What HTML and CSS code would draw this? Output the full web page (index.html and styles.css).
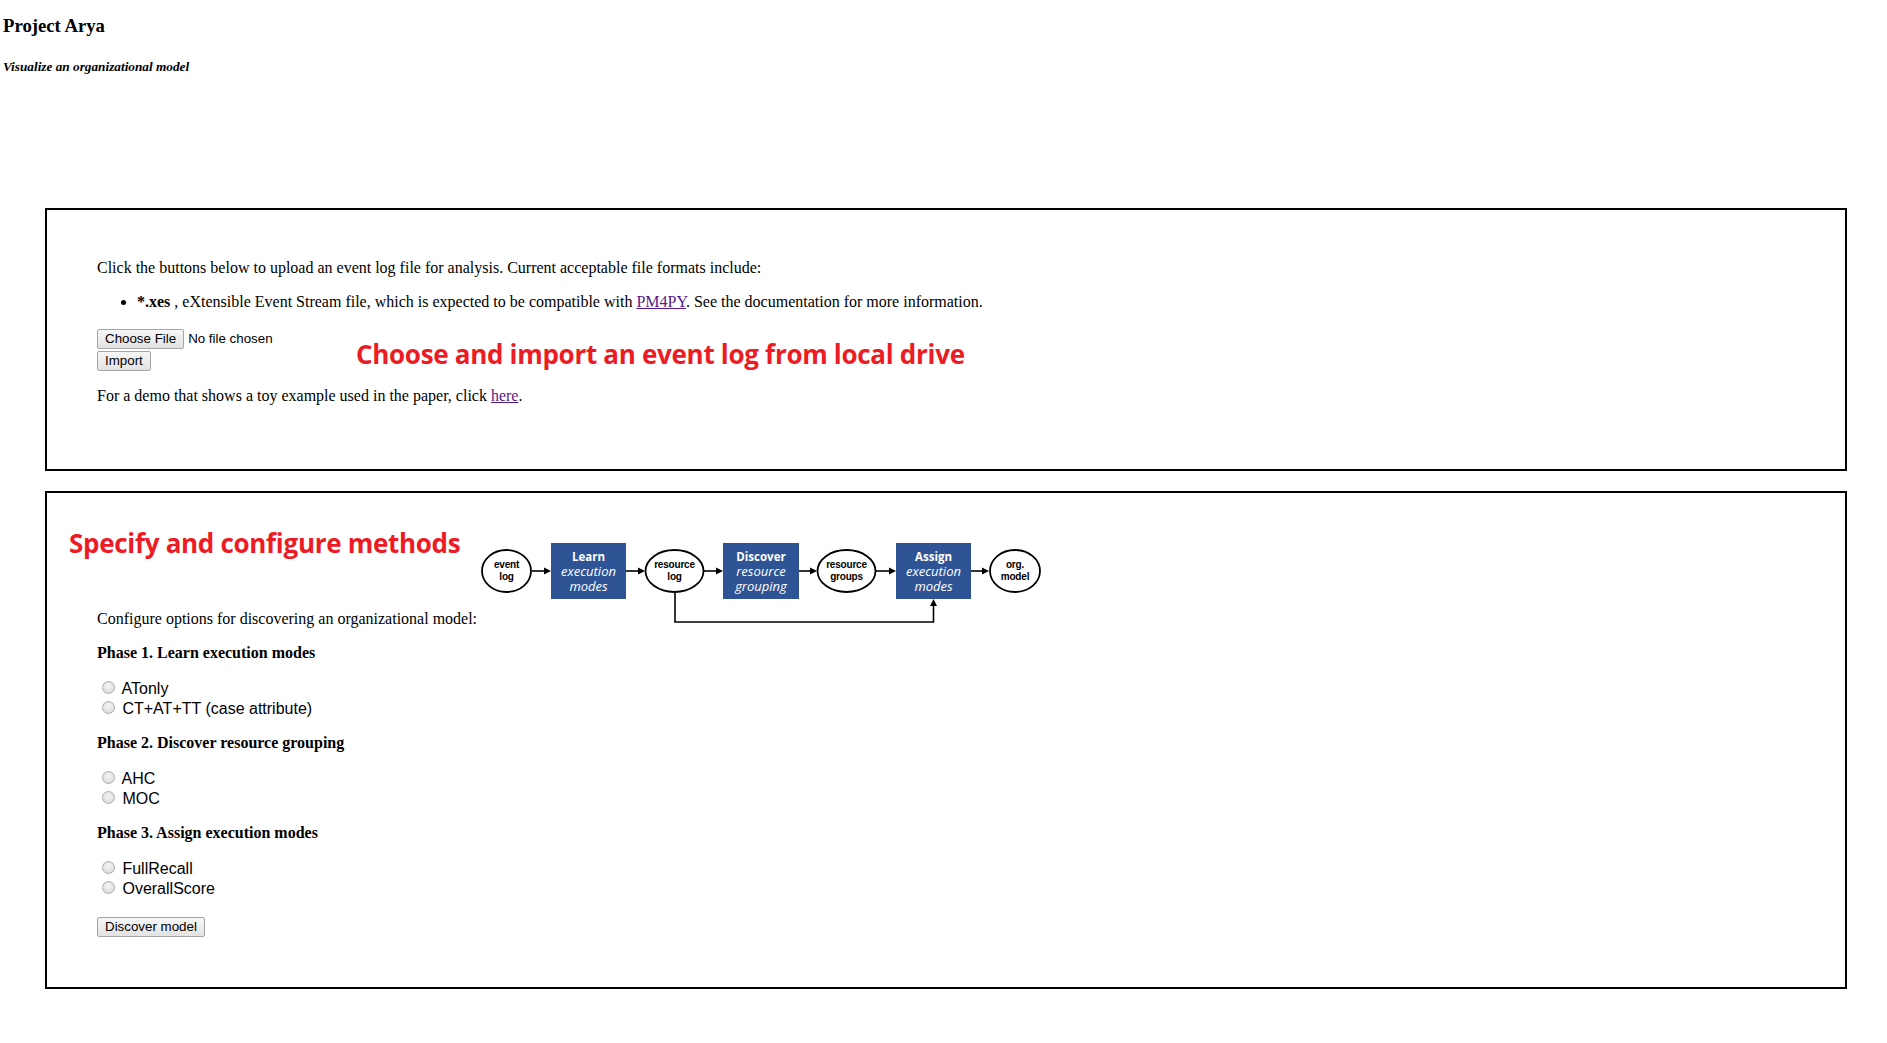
FILE: index.html
```html
<!DOCTYPE html>
<html lang="en">
<head>
<meta charset="utf-8">
<title>Project Arya</title>
<link rel="stylesheet" href="styles.css">
</head>
<body>
<header class="masthead">
  <h3 class="title">Project Arya</h3>
  <h5 class="subtitle">Visualize an organizational model</h5>
</header>

<section class="panel panel-import">
  <p>Click the buttons below to upload an event log file for analysis. Current acceptable file formats include:</p>
  <ul>
    <li><b>*.xes</b> , eXtensible Event Stream file, which is expected to be compatible with <a href="#">PM4PY</a>. See the documentation for more information.</li>
  </ul>
  <form class="upload">
    <input type="file" class="file"><br>
    <button type="button" class="btn">Import</button>
  </form>
  <p>For a demo that shows a toy example used in the paper, click <a href="#">here</a>.</p>
  <div class="callout callout-import">Choose and import an event log from local drive</div>
</section>

<section class="panel panel-config">
  <p>Configure options for discovering an organizational model:</p>

  <p class="phase">Phase 1. Learn execution modes</p>
  <p class="opts">
    <label><input type="radio" class="radio" name="p1"> ATonly</label><br>
    <label><input type="radio" class="radio" name="p1"> CT+AT+TT (case attribute)</label>
  </p>

  <p class="phase">Phase 2. Discover resource grouping</p>
  <p class="opts">
    <label><input type="radio" class="radio" name="p2"> AHC</label><br>
    <label><input type="radio" class="radio" name="p2"> MOC</label>
  </p>

  <p class="phase">Phase 3. Assign execution modes</p>
  <p class="opts">
    <label><input type="radio" class="radio" name="p3"> FullRecall</label><br>
    <label><input type="radio" class="radio" name="p3"> OverallScore</label>
  </p>

  <p class="submit"><button type="button" class="btn">Discover model</button></p>

  <div class="callout callout-config">Specify and configure methods</div>

  <svg class="flow" width="560" height="84" viewBox="0 0 560 84" aria-label="pipeline diagram">
    <g class="lines" stroke="#000" stroke-width="1.6" fill="none">
      <line x1="51" y1="28" x2="64" y2="28"/>
      <line x1="145" y1="28" x2="158" y2="28"/>
      <line x1="223" y1="28" x2="236" y2="28"/>
      <line x1="318" y1="28" x2="330" y2="28"/>
      <line x1="395" y1="28" x2="409" y2="28"/>
      <line x1="490" y1="28" x2="502" y2="28"/>
      <path d="M194,49 V79 H452.5 V63"/>
    </g>
    <g class="heads" fill="#000">
      <polygon points="63,24.5 70,28 63,31.5"/>
      <polygon points="157,24.5 164,28 157,31.5"/>
      <polygon points="235,24.5 242,28 235,31.5"/>
      <polygon points="329,24.5 336,28 329,31.5"/>
      <polygon points="408,24.5 415,28 408,31.5"/>
      <polygon points="501,24.5 508,28 501,31.5"/>
      <polygon points="449,63 452.5,56 456,63"/>
    </g>

    <g class="nodes" stroke="#000" stroke-width="1.8" fill="#fff">
      <ellipse cx="25.5" cy="28" rx="24.5" ry="21"/>
      <ellipse cx="193.5" cy="28" rx="29" ry="21"/>
      <ellipse cx="365.5" cy="28" rx="29" ry="21"/>
      <ellipse cx="534" cy="28" rx="25" ry="21"/>
    </g>
    <g class="steps" fill="#2f5496">
      <rect x="70" y="0" width="75" height="56"/>
      <rect x="242" y="0" width="76" height="56"/>
      <rect x="415" y="0" width="75" height="56"/>
    </g>

    <g class="node-text" text-anchor="middle">
      <text x="25.5" y="25">event</text><text x="25.5" y="36.5">log</text>
      <text x="193.5" y="25">resource</text><text x="193.5" y="36.5">log</text>
      <text x="365.5" y="25">resource</text><text x="365.5" y="36.5">groups</text>
      <text x="534" y="25">org.</text><text x="534" y="36.5">model</text>
    </g>
    <g class="step-text" text-anchor="middle" fill="#fff">
      <text class="step-title" x="107.5" y="18">Learn</text>
      <text class="step-sub" x="107.5" y="33">execution</text>
      <text class="step-sub" x="107.5" y="47.5">modes</text>
      <text class="step-title" x="280" y="18">Discover</text>
      <text class="step-sub" x="280" y="33">resource</text>
      <text class="step-sub" x="280" y="47.5">grouping</text>
      <text class="step-title" x="452.5" y="18">Assign</text>
      <text class="step-sub" x="452.5" y="33">execution</text>
      <text class="step-sub" x="452.5" y="47.5">modes</text>
    </g>
  </svg>
</section>
</body>
</html>
```

FILE: styles.css
```css
html, body {
  margin: 0;
  padding: 0;
  background: #fff;
}

body {
  font-family: "Liberation Serif", "Times New Roman", serif;
  font-size: 16px;
  color: #000;
}

a {
  color: #551a8b;
}

/* header */
.masthead {
  padding-left: 3px;
}

.title {
  font-size: 18.72px;
  font-weight: bold;
  margin: 15px 0 0;
}

.subtitle {
  font-size: 13.28px;
  font-weight: bold;
  font-style: italic;
  margin: 22px 0 0;
}

/* bordered panels */
.panel {
  position: relative;
  border: 2px solid #000;
  margin: 0 40px 0 45px;
  padding: 33px 50px 48px;
}

.panel-import {
  margin-top: 133px;
}

.panel-config {
  margin-top: 20px;
  padding: 101px 50px 34px;
}

.panel p {
  margin: 16px 0;
}

.panel ul {
  margin: 16px 0;
  padding-left: 40px;
}

/* upload form */
.upload {
  line-height: 21px;
}

.file {
  font: 13.33px "Liberation Sans", Arial, sans-serif;
  line-height: 16px;
  color: #000;
}

.file::file-selector-button {
  font: 13.33px "Liberation Sans", Arial, sans-serif;
  line-height: 16px;
  padding: 1px 7px;
  margin: 0 4px 0 0;
  border: 1px solid #a6a6a6;
  border-radius: 2px;
  background: linear-gradient(#f7f7f7, #e2e2e2);
  color: #000;
}

.btn {
  font: 13.33px "Liberation Sans", Arial, sans-serif;
  line-height: 16px;
  padding: 1px 7px;
  margin: 0;
  border: 1px solid #a6a6a6;
  border-radius: 2px;
  background: linear-gradient(#f7f7f7, #e2e2e2);
  color: #000;
}

/* configuration */
.phase {
  font-weight: bold;
}

.panel .opts {
  font-family: "Liberation Sans", Arial, sans-serif;
  font-size: 16px;
}

.radio {
  -webkit-appearance: none;
  appearance: none;
  box-sizing: border-box;
  width: 13px;
  height: 13px;
  margin: 3px 3px 0 5px;
  border: 1px solid #adadad;
  border-radius: 50%;
  background: radial-gradient(circle at 50% 40%, #f4f4f4 0%, #e2e2e2 60%, #d4d4d4 100%);
  vertical-align: baseline;
}

.panel .submit {
  margin-top: 19px;
}

/* red annotations */
.callout {
  position: absolute;
  font-family: "Open Sans", "Noto Sans", sans-serif;
  font-weight: bold;
  font-size: 26px;
  line-height: 26px;
  letter-spacing: -0.3px;
  color: #ed1c24;
  white-space: nowrap;
}

.callout-import {
  left: 309px;
  top: 131px;
}

.callout-config {
  left: 22px;
  top: 37px;
}

/* pipeline diagram */
.flow {
  position: absolute;
  left: 434px;
  top: 50px;
  overflow: visible;
}

.node-text {
  font-family: "Liberation Sans", Arial, sans-serif;
  font-size: 10px;
  font-weight: bold;
  letter-spacing: -0.2px;
  fill: #000;
}

.step-title {
  font-family: "Open Sans", "Noto Sans", sans-serif;
  font-size: 11.5px;
  font-weight: bold;
}

.step-sub {
  font-family: "Open Sans", "Noto Sans", sans-serif;
  font-size: 13px;
  font-style: italic;
}
```
